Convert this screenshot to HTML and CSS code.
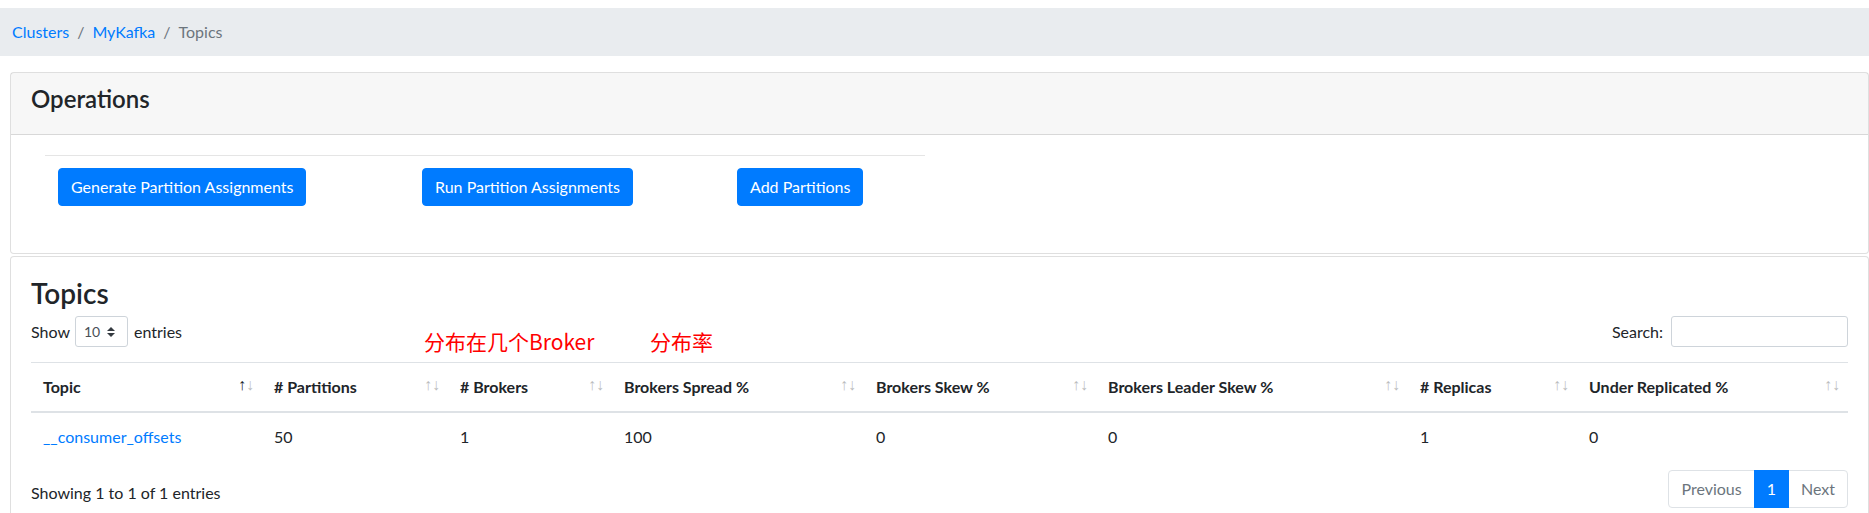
FILE: index.html
```html
<!DOCTYPE html>
<html lang="en">
<head>
<meta charset="utf-8">
<title>Topics - MyKafka</title>
<link rel="stylesheet" href="styles.css">
</head>
<body>
<nav class="crumbs">
  <a class="crumb-link" href="#">Clusters</a><span class="sep">/</span><a class="crumb-link" href="#">MyKafka</a><span class="sep">/</span><span class="crumb-active">Topics</span>
</nav>

<section class="card ops-card">
  <div class="card-header"><h4 class="card-title">Operations</h4></div>
  <div class="card-body ops-body">
    <hr class="ops-rule">
    <div class="ops-buttons">
      <button class="btn">Generate Partition Assignments</button>
      <button class="btn">Run Partition Assignments</button>
      <button class="btn">Add Partitions</button>
    </div>
  </div>
</section>

<section class="card topics-card">
  <div class="card-body topics-body">
    <h3 class="topics-title">Topics</h3>
    <div class="dt-top">
      <label class="dt-length">Show <span class="select-sm"><span>10</span><svg class="caret" width="8" height="10" viewBox="0 0 4 5"><path d="M2 0L0 2h4zm0 5L0 3h4z" fill="#343a40"/></svg></span> entries</label>
      <label class="dt-search">Search:<span class="search-input"></span></label>
    </div>
    <table class="topics-table">
      <colgroup>
        <col class="c1"><col class="c2"><col class="c3"><col class="c4"><col class="c5"><col class="c6"><col class="c7"><col>
      </colgroup>
      <thead>
        <tr>
          <th class="sorting asc">Topic</th>
          <th class="sorting"># Partitions</th>
          <th class="sorting"># Brokers</th>
          <th class="sorting">Brokers Spread %</th>
          <th class="sorting">Brokers Skew %</th>
          <th class="sorting">Brokers Leader Skew %</th>
          <th class="sorting"># Replicas</th>
          <th class="sorting">Under Replicated %</th>
        </tr>
      </thead>
      <tbody>
        <tr>
          <td><a class="topic-link" href="#">__consumer_offsets</a></td>
          <td>50</td>
          <td>1</td>
          <td>100</td>
          <td>0</td>
          <td>0</td>
          <td>1</td>
          <td>0</td>
        </tr>
      </tbody>
    </table>
    <div class="dt-bottom">
      <div class="dt-info">Showing 1 to 1 of 1 entries</div>
      <ul class="pagination">
        <li class="page-item first"><span class="page-link">Previous</span></li>
        <li class="page-item active"><span class="page-link">1</span></li>
        <li class="page-item last"><span class="page-link">Next</span></li>
      </ul>
    </div>
  </div>
  <span class="note note-brokers">分布在几个Broker</span>
  <span class="note note-spread">分布率</span>
</section>
</body>
</html>
```
FILE: styles.css
```css
html, body {
  margin: 0;
  padding: 0;
}
body {
  padding-top: 8px;
  font-family: Lato, "Noto Sans", "Liberation Sans", sans-serif;
  font-size: 16px;
  line-height: 1.5;
  color: #212529;
  background: #fff;
}

/* breadcrumb */
.crumbs {
  display: flex;
  align-items: center;
  background: #e9ecef;
  padding: 12px 12px;
  margin-bottom: 16px;
  line-height: 24px;
}
.crumb-link {
  color: #007bff;
  text-decoration: none;
}
.sep {
  color: #6c757d;
  padding: 0 8px;
}
.crumb-active {
  color: #6c757d;
}

/* cards */
.card {
  border: 1px solid rgba(0, 0, 0, .125);
  border-radius: 4px;
  margin-left: 10px;
  background: #fff;
}
.ops-card {
  margin-bottom: 2px;
}
.card-header {
  background: rgba(0, 0, 0, .03);
  padding: 12px 20px;
  border-bottom: 1px solid rgba(0, 0, 0, .125);
}
.card-title {
  margin: 0 0 8px;
  font-size: 24px;
  font-weight: 600;
  line-height: 1.2;
}
.ops-body {
  padding: 20px 20px 47px;
}
.ops-rule {
  margin: 0 0 12px 14px;
  width: 880px;
  border: 0;
  border-top: 1px solid rgba(0, 0, 0, .1);
  height: 0;
}
.ops-buttons {
  display: grid;
  grid-template-columns: 364px 315px auto;
  justify-content: start;
  padding-left: 27px;
}
.btn {
  justify-self: start;
  font-family: inherit;
  font-size: 16px;
  line-height: 24px;
  color: #fff;
  background: #007bff;
  border: 1px solid #007bff;
  border-radius: 4px;
  padding: 6px 12px;
  cursor: pointer;
}

/* topics card */
.topics-card {
  position: relative;
}
.topics-body {
  padding: 20px 20px 20px;
}
.topics-title {
  margin: 0 0 6px;
  font-size: 28px;
  font-weight: 600;
  line-height: 1.2;
}
.dt-top {
  display: flex;
  justify-content: space-between;
  align-items: center;
  height: 31px;
}
.dt-length {
  display: flex;
  align-items: center;
}
.select-sm {
  display: inline-flex;
  align-items: center;
  justify-content: space-between;
  box-sizing: border-box;
  width: 53px;
  height: 31px;
  margin: 0 6px 0 5px;
  padding: 0 12px 0 8px;
  border: 1px solid #ced4da;
  border-radius: 3px;
  font-size: 14px;
  color: #495057;
}
.dt-search {
  display: flex;
  align-items: center;
}
.search-input {
  display: inline-block;
  box-sizing: border-box;
  width: 177px;
  height: 31px;
  margin-left: 8px;
  border: 1px solid #ced4da;
  border-radius: 3px;
}

/* table */
.topics-table {
  width: 100%;
  table-layout: fixed;
  border-collapse: collapse;
  margin-top: 15px;
  margin-bottom: 6px;
}
.c1 { width: 231px; }
.c2 { width: 186px; }
.c3 { width: 164px; }
.c4 { width: 252px; }
.c5 { width: 232px; }
.c6 { width: 312px; }
.c7 { width: 169px; }
.topics-table th {
  position: relative;
  text-align: left;
  font-weight: 700;
  line-height: 24px;
  padding: 12px 30px 12px 12px;
  border-top: 1px solid #dee2e6;
  border-bottom: 2px solid #dee2e6;
  white-space: nowrap;
}
.topics-table td {
  line-height: 24px;
  padding: 12px;
  border-top: 1px solid #dee2e6;
}
.sorting::before,
.sorting::after {
  position: absolute;
  bottom: 14px;
  font-family: "Liberation Sans", sans-serif;
  font-weight: 400;
  opacity: .3;
}
.sorting::before {
  content: "\2191";
  right: 16px;
}
.sorting::after {
  content: "\2193";
  right: 8px;
}
.sorting.asc::before {
  opacity: 1;
}
.topic-link {
  color: #007bff;
  text-decoration: none;
}

/* footer */
.dt-bottom {
  display: flex;
  justify-content: space-between;
  align-items: flex-start;
  margin-top: 9px;
}
.dt-info {
  padding-top: 11px;
}
.pagination {
  display: flex;
  list-style: none;
  margin: 0;
  padding: 0;
}
.page-link {
  display: block;
  padding: 8px 12px;
  line-height: 20px;
  border: 1px solid #dee2e6;
  color: #6c757d;
  background: #fff;
  margin-left: -1px;
}
.first .page-link {
  margin-left: 0;
  border-radius: 4px 0 0 4px;
}
.last .page-link {
  border-radius: 0 4px 4px 0;
}
.active .page-link {
  background: #007bff;
  border-color: #007bff;
  color: #fff;
  position: relative;
}

/* red annotations */
.note {
  position: absolute;
  top: 74px;
  color: #ff0000;
  font-family: "Noto Sans CJK SC", sans-serif;
  font-size: 21px;
  line-height: 1;
  white-space: nowrap;
}
.note-brokers {
  left: 413px;
}
.note-spread {
  left: 639px;
}
```
